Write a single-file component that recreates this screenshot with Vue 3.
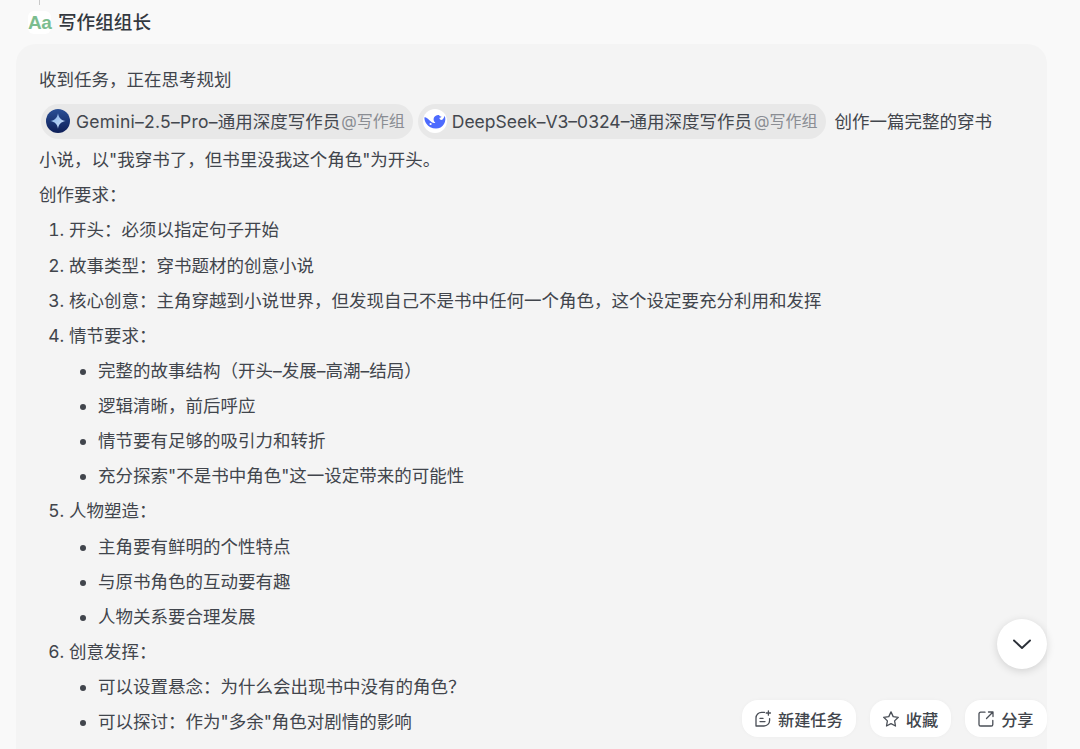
<script setup>
const s1 = ['主角要有鲜明的个性特点', '与原书角色的互动要有趣', '人物关系要合理发展']
const s2 = ['完整的故事结构（开头–发展–高潮–结局）', '逻辑清晰，前后呼应', '情节要有足够的吸引力和转折', '充分探索"不是书中角色"这一设定带来的可能性']
const s3 = ['可以设置悬念：为什么会出现书中没有的角色？', '可以探讨：作为"多余"角色对剧情的影响']
</script>

<template>
  <div class="page">
    <div class="thread"></div>
    <header class="head">
      <div class="logo">Aa</div>
      <div class="name">写作组组长</div>
    </header>
    <main class="card">
      <p class="line">收到任务，正在思考规划</p>
      <p class="chips">
        <span class="chip">
          <svg class="ava" viewBox="0 0 24 24">
            <defs>
              <linearGradient id="g1" x1="0" y1="0" x2="0" y2="1">
                <stop offset="0" stop-color="#2a4f96" />
                <stop offset="1" stop-color="#0e1f58" />
              </linearGradient>
              <linearGradient id="g2" x1="0" y1="0" x2="1" y2="1">
                <stop offset="0" stop-color="#7fb0ec" />
                <stop offset="1" stop-color="#d5e4f8" />
              </linearGradient>
            </defs>
            <circle cx="12" cy="12" r="12" fill="url(#g1)" />
            <path d="M12 4.2C12.6 8.6 15.2 11.3 19.8 12 15.2 12.7 12.6 15.4 12 19.8 11.4 15.4 8.8 12.7 4.2 12 8.8 11.3 11.4 8.6 12 4.2Z" fill="url(#g2)" />
          </svg>
          <span class="cname"><span class="gem">Gemini–2.5–Pro–</span>通用深度写作员</span><span class="at at1">@写作组</span>
        </span>
        <span class="chip chip2">
          <svg class="ava" viewBox="0 0 24 24">
            <circle cx="12" cy="12" r="12" fill="#fff" />
            <path d="M1.4 8.4C2.8 7.8 3.6 9 4.6 9.6 6 10.6 7 12 8.4 13 9.8 14 11.2 14.4 12.4 13.8 10.8 12.4 10 10.4 11 8.4 12 6.6 14.2 5.6 16 6 16.6 7 17.4 7.6 18.6 7.8 17.8 8.8 17.2 9 16.4 8.8 16.6 10.2 17.4 11 18.6 11 20 10.6 21 9 21.6 6.8 22.8 9.4 22.6 12.4 21 15 19.2 18 16.4 19.6 13 19.6 8.8 19.6 5.4 17.6 3.4 14.8 2 12.8 1.4 10.6 1.4 8.4Z" fill="#4d6bfe" />
            <circle cx="7.6" cy="15" r="1.1" fill="#fff" />
          </svg>
          <span class="cname">DeepSeek–V3–0324–通用深度写作员</span><span class="at">@写作组</span>
        </span>
        <span class="after">创作一篇完整的穿书</span>
      </p>
      <p class="line">小说，以"我穿书了，但书里没我这个角色"为开头。</p>
      <p class="line">创作要求：</p>
      <ol class="list">
        <li>开头：必须以指定句子开始</li>
        <li>故事类型：穿书题材的创意小说</li>
        <li>核心创意：主角穿越到小说世界，但发现自己不是书中任何一个角色，这个设定要充分利用和发挥</li>
        <li>情节要求：
          <ul class="sub"><li v-for="t in s2" :key="t">{{ t }}</li></ul>
        </li>
        <li>人物塑造：
          <ul class="sub"><li v-for="t in s1" :key="t">{{ t }}</li></ul>
        </li>
        <li>创意发挥：
          <ul class="sub"><li v-for="t in s3" :key="t">{{ t }}</li></ul>
        </li>
      </ol>
    </main>
    <button class="down" aria-label="向下滚动">
      <svg viewBox="0 0 24 24" width="24" height="24" fill="none" stroke="#2b3038" stroke-width="1.9" stroke-linecap="round" stroke-linejoin="round"><path d="M4 8.5 12 16l8-7.5" /></svg>
    </button>
    <div class="actions">
      <button class="act">
        <svg viewBox="0 0 16 17" width="16" height="17" fill="none" stroke="#4a4f57" stroke-width="1.3" stroke-linecap="round" stroke-linejoin="round"><path d="M9.5 2.4H6.6A5.6 5.6 0 0 0 1 8v8h8A5.6 5.6 0 0 0 14.6 10.4V8.6" /><path d="M13.4 .8v4.4M11.2 3h4.4M5 8.4h3M5 11.6h5" /></svg>
        新建任务
      </button>
      <button class="act">
        <svg viewBox="0 0 16 16" width="16" height="16" fill="none" stroke="#4a4f57" stroke-width="1.3" stroke-linejoin="round"><path d="M8 .9l2.2 4.7 5.1.7-3.7 3.6.9 5.1L8 12.6 3.5 15l.9-5.1L.7 6.3l5.1-.7Z" /></svg>
        收藏
      </button>
      <button class="act">
        <svg viewBox="0 0 16 16" width="16" height="16" fill="none" stroke="#4a4f57" stroke-width="1.3" stroke-linecap="round" stroke-linejoin="round"><path d="M7 1.2H2.6A1.6 1.6 0 0 0 1 2.8v10.6A1.6 1.6 0 0 0 2.6 15h10.6a1.6 1.6 0 0 0 1.6-1.6V9.5" /><path d="M8.5 7.5 14.7 1.3M10.5 1h4.5v4.5" /></svg>
        分享
      </button>
    </div>
  </div>
</template>

<style>
html, body { margin: 0; background: #f9f9f9; overflow: hidden; }
</style>

<style scoped>
.page {
  position: relative;
  width: 1080px;
  height: 749px;
  overflow: hidden;
  background: #f9f9f9;
  font-family: Inter, "Noto Sans CJK SC", sans-serif;
  font-size: 17.5px;
  color: #41454c;
}
.thread { position: absolute; left: 39px; top: 0; width: 1px; height: 5px; background: #c9c9c9; }
.head { display: flex; align-items: center; height: 44px; padding-left: 28px; gap: 7px; box-sizing: border-box; }
.logo {
  width: 23px; height: 23px; border-radius: 6px; background: #fff;
  color: #7cbd8f; font: 700 19px/23px "Liberation Sans", sans-serif; text-align: center;
  letter-spacing: -.4px;
}
.name { font-size: 18.6px; font-weight: 500; color: #33383f; margin-bottom: 3px; }
.card {
  margin: 0 33px 0 16px;
  height: 760px;
  padding: 18px 24px 0 24px;
  background: #f4f4f4;
  border-radius: 20px 20px 0 0;
  line-height: 35.12px;
}
p { margin: 0; }
.line { margin-left: -1px; }
.chips { display: flex; align-items: center; height: 48px; margin-bottom: -3px; white-space: nowrap; }
.chip {
  display: inline-flex; align-items: center; height: 35px; border-radius: 18px;
  background: #e8e8e8; padding: 0 8px 0 5px; margin-left: 1px; margin-right: 4px;
}
.chip2 { margin-right: 8px; padding-right: 9px; }
.chip2 .ava { margin-right: 5px; }
.ava { width: 24px; height: 24px; margin-right: 6px; flex: none; }
.cname { color: #43474e; }
.gem { letter-spacing: .27px; }
.at { font-size: 16px; color: #8a8d93; margin-left: 2px; }
.at1 { margin-left: 1px; }
.list { margin: 0; padding: 0 0 0 29px; }
.sub { margin: 0; padding: 0 0 0 29px; list-style: disc; }
.down {
  position: absolute; left: 997px; top: 619px; width: 50px; height: 50px; padding: 0;
  border: 0; border-radius: 50%; background: #fff;
  box-shadow: 0 2px 8px rgba(0,0,0,.14);
  display: flex; align-items: center; justify-content: center;
}
.actions { position: absolute; left: 742px; top: 700px; display: flex; gap: 14px; }
.act {
  display: flex; align-items: center; gap: 7px; height: 37px; padding: 0 13px;
  border: 0; border-radius: 16px; background: #fff;
  box-shadow: 0 0 4px rgba(0,0,0,.03);
  font: 500 16.2px "Noto Sans CJK SC", sans-serif; color: #41454c;
}
</style>
